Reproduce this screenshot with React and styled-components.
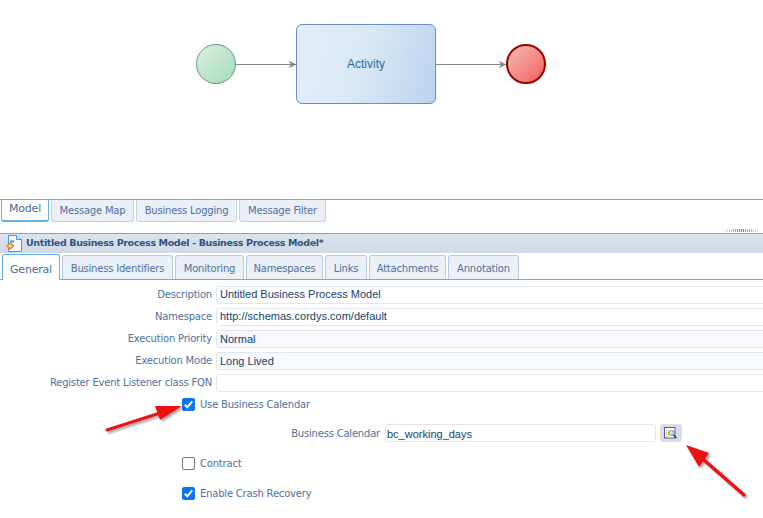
import React from "react";
import styled, { createGlobalStyle } from "styled-components";

const GlobalStyle = createGlobalStyle`
  html, body {
    margin: 0;
    padding: 0;
    background: #fff;
    overflow: hidden;
  }
  body {
    font-family: "DejaVu Sans", sans-serif;
    font-size: 10px;
    letter-spacing: -0.2px;
  }
`;

const Page = styled.div`
  position: relative;
  width: 763px;
  height: 518px;
  overflow: hidden;
`;

/* diagram */
const Canvas = styled.div`
  height: 199px;
  box-sizing: border-box;
  padding: 24px 0 0 196px;
`;

const Flow = styled.div`
  display: flex;
  align-items: center;
  height: 80px;
`;

const Event = styled.div`
  box-sizing: border-box;
  width: 40px;
  height: 40px;
  border-radius: 50%;
  border: ${(p) => (p.$end ? "2px solid #990000" : "1px solid #5f9c7c")};
  background: ${(p) =>
    p.$end
      ? "linear-gradient(135deg, #f8bdb9, #ee5f5a)"
      : "linear-gradient(135deg, #dcefe3, #a3dbb8)"};
`;

const Activity = styled.div`
  box-sizing: border-box;
  width: 140px;
  height: 80px;
  display: flex;
  align-items: center;
  justify-content: center;
  border: 1px solid #6c8ebf;
  border-radius: 6px;
  background: linear-gradient(105deg, #e3edf8 0%, #dae8f6 45%, #bbd4ef 100%);
  color: #1f6ea3;
  font-family: "Liberation Sans", sans-serif;
  font-size: 12px;
  letter-spacing: 0;
`;

const Connector = ({ width }) => (
  <svg width={width} height="12" viewBox={`0 0 ${width} 12`}>
    <path d={`M0 6.5H${width}`} stroke="#7d8a80" strokeWidth="1" fill="none" />
    <path
      d={`M${width - 6.5} 3.5L${width - 0.5} 6.5L${width - 6.5} 9.5L${width - 4.5} 6.5Z`}
      fill="#7d8a80"
      stroke="#7d8a80"
      strokeWidth="0.8"
    />
  </svg>
);

/* tabs */
const TopStrip = styled.div`
  height: 33px;
  border-top: 1px solid #5fb0e6;
  position: relative;
  display: flex;
  align-items: flex-start;
  gap: 2px;
  padding-left: 1px;
`;

const TopTab = styled.div`
  box-sizing: border-box;
  height: 22px;
  width: ${(p) => p.$w}px;
  display: flex;
  align-items: center;
  justify-content: center;
  white-space: nowrap;
  color: ${(p) => (p.$active ? "#4d6a96" : "#50709f")};
  font-size: ${(p) => (p.$active ? "11px" : "10px")};
  padding-bottom: ${(p) => (p.$active ? "3px" : "0")};
  background: ${(p) => (p.$active ? "#fff" : "#ebf0f7")};
  border: 1px solid ${(p) => (p.$active ? "#5fb0e6" : "#c3d3e6")};
  border-top: none;
  border-bottom-width: ${(p) => (p.$active ? "2px" : "1px")};
  border-radius: 0 0 3px 3px;
`;

const Grip = styled.div`
  position: absolute;
  right: 3px;
  bottom: 1px;
  width: 39px;
  height: 3px;
  background: repeating-linear-gradient(90deg, #2f86dc 0 1px, #fff 1px 2px);
  mask-image: linear-gradient(90deg, transparent, #000 55%, transparent);
`;

const TitleBar = styled.div`
  height: 20px;
  box-sizing: border-box;
  border-top: 1px solid #5fb0e6;
  display: flex;
  align-items: center;
  gap: 3px;
  padding-left: 6px;
  background: linear-gradient(#dbe3ee, #d0dae8);
`;

const Title = styled.span`
  color: #34527f;
  font-weight: 700;
  font-size: 9.5px;
  letter-spacing: -0.37px;
  white-space: nowrap;
  padding-bottom: 2px;
`;

const DocIcon = () => (
  <svg width="17" height="18" viewBox="0 0 17 18" style={{ flex: "none" }}>
    <path d="M2.5 0.5H10.5L15.5 4.5V16.5H2.5Z" fill="#f2f8fe" stroke="#3f9ad8" strokeWidth="1" />
    <path d="M10.5 0.5V4.5H15.5" fill="#cfe5f6" stroke="#3f9ad8" strokeWidth="1" />
    <path d="M4 6.5H8" stroke="#3f9ad8" strokeWidth="2" />
    <path d="M4 7.5L8 11L4 14.5L0.5 11Z" fill="#f2a030" stroke="#c8741a" strokeWidth="0.8" />
    <rect x="3" y="10" width="2" height="2" fill="#ffe9b0" />
  </svg>
);

const SubTabs = styled.div`
  display: flex;
  align-items: flex-end;
  gap: 2px;
  height: 27px;
  box-sizing: border-box;
  padding-left: 2px;
  border-bottom: 1px solid #5fb0e6;
`;

const SubTab = styled.div`
  box-sizing: border-box;
  width: ${(p) => p.$w}px;
  height: ${(p) => (p.$active ? "26px" : "24px")};
  display: flex;
  align-items: center;
  justify-content: center;
  white-space: nowrap;
  color: ${(p) => (p.$active ? "#4d6a96" : "#50709f")};
  font-size: ${(p) => (p.$active ? "11px" : "10px")};
  background: ${(p) => (p.$active ? "#fff" : "#ebf0f7")};
  border: 1px solid ${(p) => (p.$active ? "#5fb0e6" : "#b5c9e2")};
  border-bottom: none;
  border-radius: 3px 3px 0 0;
  padding-top: ${(p) => (p.$active ? "3px" : "1px")};
  margin-bottom: ${(p) => (p.$active ? "-1px" : "0")};
`;

/* form */
const Form = styled.div`
  padding-top: 4px;
`;

const Row = styled.div`
  display: flex;
  align-items: center;
  height: 22px;
`;

const Label = styled.label`
  width: 216px;
  flex: none;
  text-align: right;
  color: #50709f;
  white-space: nowrap;
  padding-right: 4px;
  box-sizing: border-box;
  padding-bottom: 2px;
`;

const Field = styled.div`
  box-sizing: border-box;
  height: 18px;
  flex: 1;
  margin-right: -6px;
  padding-left: 3px;
  padding-bottom: ${(p) => (p.$select ? "0" : "2px")};
  display: flex;
  align-items: center;
  border: 1px solid #dfe7f2;
  border-radius: 3px;
  background: ${(p) => (p.$select ? "#f7f9fc" : "#fff")};
  color: #14426b;
  font-family: "Liberation Sans", sans-serif;
  font-size: 11px;
  letter-spacing: 0;
  white-space: nowrap;
`;

const CheckRow = styled.div`
  display: flex;
  align-items: center;
  gap: 5px;
  padding-left: 182px;
  height: 16px;
  margin-top: ${(p) => p.$top}px;
  color: #50709f;
`;

const Box = styled.span`
  box-sizing: border-box;
  width: 13px;
  height: 13px;
  flex: none;
  display: flex;
  align-items: center;
  justify-content: center;
  border-radius: 2px;
  background: ${(p) => (p.$on ? "#0b76f2" : "#fff")};
  border: 1px solid ${(p) => (p.$on ? "#0b76f2" : "#767676")};
`;

const Tick = () => (
  <svg width="11" height="11" viewBox="0 0 11 11">
    <path d="M1.8 5.8L4.3 8.3L9.2 2.4" stroke="#fff" strokeWidth="2" fill="none" />
  </svg>
);

const CalendarRow = styled.div`
  display: flex;
  align-items: center;
  height: 18px;
  margin-top: 12px;
`;

const CalendarLabel = styled.label`
  width: 381px;
  flex: none;
  text-align: right;
  color: #50709f;
  white-space: nowrap;
  box-sizing: border-box;
  padding-right: 1px;
`;

const CalendarField = styled(Field)`
  flex: none;
  width: 271px;
  margin: 0 0 0 4px;
  padding: 1px 0 0 1px;
`;

const LookupButton = styled.button`
  box-sizing: border-box;
  width: 22px;
  height: 18px;
  margin-left: 4px;
  padding: 0;
  display: flex;
  align-items: center;
  justify-content: center;
  border: none;
  border-radius: 3px;
  background: #dadde3;
`;

const LookupIcon = () => (
  <svg width="14" height="13" viewBox="0 0 14 13">
    <rect x="0.5" y="0.5" width="10.5" height="10.5" fill="#fff" stroke="#3f5fb0" />
    <path d="M2.5 3V10M4.5 3V10" stroke="#d8b050" strokeWidth="1" strokeDasharray="1 1" />
    <circle cx="7.5" cy="6" r="2.6" fill="#cfe0f6" stroke="#6f8fc0" />
    <path d="M9.5 8L12.5 11" stroke="#444" strokeWidth="1.6" />
  </svg>
);

/* callouts lying over the form */
const Callouts = styled.svg`
  position: absolute;
  left: 0;
  top: 0;
  pointer-events: none;
  filter: drop-shadow(2px 2px 1.2px rgba(0, 0, 0, 0.35));
`;

const topTabs = [
  ["Model", 48, true],
  ["Message Map", 83],
  ["Business Logging", 101],
  ["Message Filter", 87],
];

const subTabs = [
  ["General", 58, true],
  ["Business Identifiers", 111],
  ["Monitoring", 69],
  ["Namespaces", 77],
  ["Links", 42],
  ["Attachments", 77],
  ["Annotation", 71],
];

const fields = [
  ["Description", "Untitled Business Process Model"],
  ["Namespace", "http://schemas.cordys.com/default"],
  ["Execution Priority", "Normal", true],
  ["Execution Mode", "Long Lived", true],
  ["Register Event Listener class FQN", ""],
];

export default function App() {
  return (
    <Page>
      <GlobalStyle />
      <Canvas>
        <Flow>
          <Event />
          <Connector width={60} />
          <Activity>Activity</Activity>
          <Connector width={70} />
          <Event $end />
        </Flow>
      </Canvas>

      <TopStrip>
        {topTabs.map(([text, w, active]) => (
          <TopTab key={text} $w={w} $active={active}>
            {text}
          </TopTab>
        ))}
        <Grip />
      </TopStrip>

      <TitleBar>
        <DocIcon />
        <Title>Untitled Business Process Model - Business Process Model*</Title>
      </TitleBar>

      <SubTabs>
        {subTabs.map(([text, w, active]) => (
          <SubTab key={text} $w={w} $active={active}>
            {text}
          </SubTab>
        ))}
      </SubTabs>

      <Form>
        {fields.map(([label, value, select]) => (
          <Row key={label}>
            <Label>{label}</Label>
            <Field $select={select}>{value}</Field>
          </Row>
        ))}

        <CheckRow $top={2}>
          <Box $on>
            <Tick />
          </Box>
          Use Business Calendar
        </CheckRow>

        <CalendarRow>
          <CalendarLabel>Business Calendar</CalendarLabel>
          <CalendarField>bc_working_days</CalendarField>
          <LookupButton>
            <LookupIcon />
          </LookupButton>
        </CalendarRow>

        <CheckRow $top={13}>
          <Box />
          Contract
        </CheckRow>

        <CheckRow $top={14}>
          <Box $on>
            <Tick />
          </Box>
          Enable Crash Recovery
        </CheckRow>
      </Form>

      <Callouts width="763" height="518" viewBox="0 0 763 518">
        <path d="M107 430L160 413" stroke="#ee1111" strokeWidth="3" strokeLinecap="round" />
        <path d="M182 406L155 406L160 420Z" fill="#ee1111" />
        <path d="M744 495L704 460" stroke="#ee1111" strokeWidth="3.4" strokeLinecap="round" />
        <path d="M686 445L709 453L699 467Z" fill="#ee1111" />
      </Callouts>
    </Page>
  );
}
